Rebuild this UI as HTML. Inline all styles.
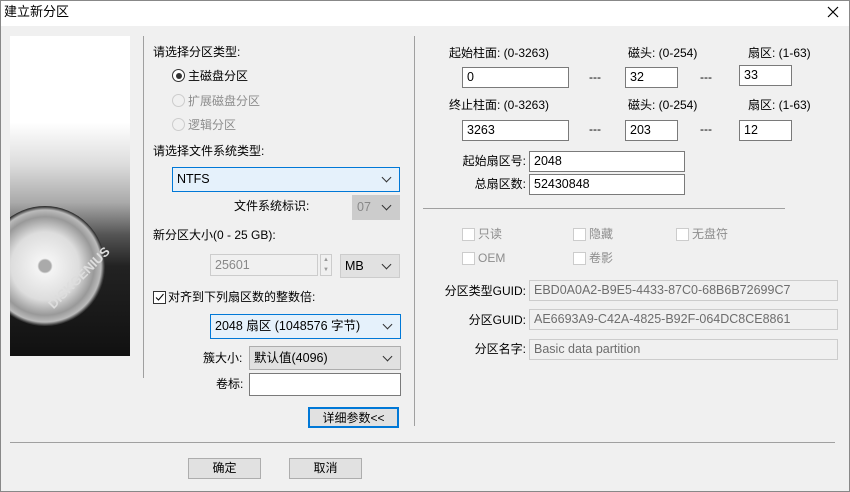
<!DOCTYPE html><html><head><meta charset="utf-8"><style>
*{box-sizing:border-box;margin:0;padding:0}
body{width:850px;height:492px;background:#f0f0f0;font-family:"Liberation Sans","Noto Sans CJK SC",sans-serif;font-size:12px;color:#000;position:relative;overflow:hidden}
.a{position:absolute;white-space:nowrap;line-height:16px}
.in{position:absolute;background:#fff;border:1px solid #7a7a7a;padding-left:4px;line-height:18px;font-size:12.5px}
.dis{background:#f0f0f0;border-color:#ccc;color:#6d6d6d}
.cb{position:absolute;border:1px solid #adadad;background:#e1e1e1;padding-left:4px;line-height:22px;font-size:12.5px}
.cb:after{content:"";position:absolute;right:9px;top:6px;width:6px;height:6px;border-right:1px solid #333;border-bottom:1px solid #333;transform:rotate(45deg)}
.blue{border-color:#0078d7;background:#e5f1fb}
.chk{position:absolute;width:13px;height:13px;border:1px solid #ccc;background:#fff}
.g{color:#8d8d8d}
.btn{position:absolute;border:1px solid #adadad;background:#e1e1e1;text-align:center;line-height:18px}
.r{text-align:right}
</style></head><body>
<div class="a" style="left:0;top:0;width:850px;height:492px;border:1px solid #888"></div>
<div class="a" style="left:1px;top:1px;width:848px;height:25px;background:#fff"></div>
<div class="a" style="left:4px;top:4px;font-size:13px">建立新分区</div>
<svg class="a" style="left:827px;top:6px" width="12" height="12"><path d="M1 1L11 11M11 1L1 11" stroke="#000" stroke-width="1.2"/></svg>
<div class="a" style="left:10px;top:36px;width:120px;height:320px;overflow:hidden;background:linear-gradient(#fff 0%,#fff 27%,#ddd 40%,#aaa 52%,#555 62%,#222 72%,#111 100%)">
<div style="position:absolute;left:-25px;top:170px;width:120px;height:120px;border-radius:50%;background:radial-gradient(#aaa 0 7%,#f4f4f4 9%,#ddd 40%,#999 58%,#bbb 66%,#333 70%)"></div>
<div style="position:absolute;left:35px;top:265px;color:#ddd;font-weight:bold;font-size:13px;transform:rotate(-45deg);transform-origin:left top">DISKGENIUS</div></div>
<div class="a" style="left:143px;top:36px;width:1px;height:342px;background:#a0a0a0"></div>
<div class="a" style="left:414px;top:36px;width:1px;height:390px;background:#a0a0a0"></div>
<div class="a" style="left:153px;top:44px">请选择分区类型:</div>
<div class="a" style="left:172px;top:69px;width:13px;height:13px;border:1px solid #333;border-radius:50%;background:#fff"><div style="margin:2.5px;width:6px;height:6px;border-radius:50%;background:#333"></div></div>
<div class="a" style="left:188px;top:68px">主磁盘分区</div>
<div class="a" style="left:172px;top:94px;width:13px;height:13px;border:1px solid #ccc;border-radius:50%"></div>
<div class="a g" style="left:188px;top:93px">扩展磁盘分区</div>
<div class="a" style="left:172px;top:118px;width:13px;height:13px;border:1px solid #ccc;border-radius:50%"></div>
<div class="a g" style="left:188px;top:117px">逻辑分区</div>
<div class="a" style="left:153px;top:143px">请选择文件系统类型:</div>
<div class="cb blue" style="left:172px;top:167px;width:228px;height:25px">NTFS</div>
<div class="a" style="left:234px;top:198px">文件系统标识:</div>
<div class="cb" style="left:352px;top:195px;width:48px;height:25px;border-color:#ccc;background:#ccc;color:#888">07</div>
<div class="a" style="left:153px;top:227px">新分区大小(0 - 25 GB):</div>
<div class="in dis" style="left:210px;top:254px;width:108px;height:22px;color:#888;line-height:20px">25601</div>
<div class="a" style="left:320px;top:254px;width:12px;height:22px;border:1px solid #ccc;font-size:6px;line-height:10px;text-align:center;color:#999">▲<br>▼</div>
<div class="cb" style="left:340px;top:254px;width:60px;height:24px;border-color:#ccc">MB</div>
<div class="a" style="left:153px;top:291px;width:13px;height:13px;border:1px solid #333;background:#fff"><svg width="11" height="11" style="display:block"><path d="M2 5.5L4.5 8L9.5 2" stroke="#000" fill="none"/></svg></div>
<div class="a" style="left:168px;top:289px">对齐到下列扇区数的整数倍:</div>
<div class="cb blue" style="left:210px;top:314px;width:191px;height:25px">2048 扇区 (1048576 字节)</div>
<div class="a" style="left:203px;top:350px">簇大小:</div>
<div class="cb" style="left:249px;top:346px;width:152px;height:24px">默认值(4096)</div>
<div class="a" style="left:216px;top:376px">卷标:</div>
<div class="in" style="left:249px;top:373px;width:152px;height:23px"></div>
<div class="btn" style="left:308px;top:407px;width:91px;height:21px;border:2px solid #0078d7">详细参数&lt;&lt;</div>
<div class="a" style="left:10px;top:442px;width:825px;height:1px;background:#a0a0a0"></div>
<div class="btn" style="left:188px;top:458px;width:73px;height:21px">确定</div>
<div class="btn" style="left:289px;top:458px;width:73px;height:21px">取消</div>
<div class="a" style="left:449px;top:45px">起始柱面: (0-3263)</div>
<div class="a" style="left:628px;top:45px">磁头: (0-254)</div>
<div class="a" style="left:748px;top:45px">扇区: (1-63)</div>
<div class="in" style="left:462px;top:67px;width:107px;height:21px">0</div>
<div class="a" style="left:589px;top:69px">---</div>
<div class="in" style="left:625px;top:67px;width:53px;height:21px">32</div>
<div class="a" style="left:700px;top:69px">---</div>
<div class="in" style="left:739px;top:65px;width:53px;height:21px">33</div>
<div class="a" style="left:449px;top:97px">终止柱面: (0-3263)</div>
<div class="a" style="left:628px;top:97px">磁头: (0-254)</div>
<div class="a" style="left:748px;top:97px">扇区: (1-63)</div>
<div class="in" style="left:462px;top:120px;width:107px;height:21px">3263</div>
<div class="a" style="left:589px;top:121px">---</div>
<div class="in" style="left:625px;top:120px;width:53px;height:21px">203</div>
<div class="a" style="left:700px;top:121px">---</div>
<div class="in" style="left:739px;top:120px;width:53px;height:21px">12</div>
<div class="a r" style="left:420px;width:106px;top:153px">起始扇区号:</div>
<div class="in" style="left:529px;top:151px;width:156px;height:21px">2048</div>
<div class="a r" style="left:420px;width:106px;top:176px">总扇区数:</div>
<div class="in" style="left:529px;top:174px;width:156px;height:21px">52430848</div>
<div class="a" style="left:423px;top:208px;width:362px;height:1px;background:#a0a0a0"></div>
<div class="chk" style="left:462px;top:228px"></div><div class="a g" style="left:478px;top:226px">只读</div>
<div class="chk" style="left:573px;top:228px"></div><div class="a g" style="left:589px;top:226px">隐藏</div>
<div class="chk" style="left:676px;top:228px"></div><div class="a g" style="left:692px;top:226px">无盘符</div>
<div class="chk" style="left:462px;top:252px"></div><div class="a g" style="left:478px;top:250px">OEM</div>
<div class="chk" style="left:573px;top:252px"></div><div class="a g" style="left:589px;top:250px">卷影</div>
<div class="a r" style="left:420px;width:106px;top:283px">分区类型GUID:</div>
<div class="in dis" style="left:529px;top:280px;width:309px;height:21px">EBD0A0A2-B9E5-4433-87C0-68B6B72699C7</div>
<div class="a r" style="left:420px;width:106px;top:312px">分区GUID:</div>
<div class="in dis" style="left:529px;top:309px;width:309px;height:21px">AE6693A9-C42A-4825-B92F-064DC8CE8861</div>
<div class="a r" style="left:420px;width:106px;top:341px">分区名字:</div>
<div class="in dis" style="left:529px;top:339px;width:309px;height:21px">Basic data partition</div>
</body></html>
